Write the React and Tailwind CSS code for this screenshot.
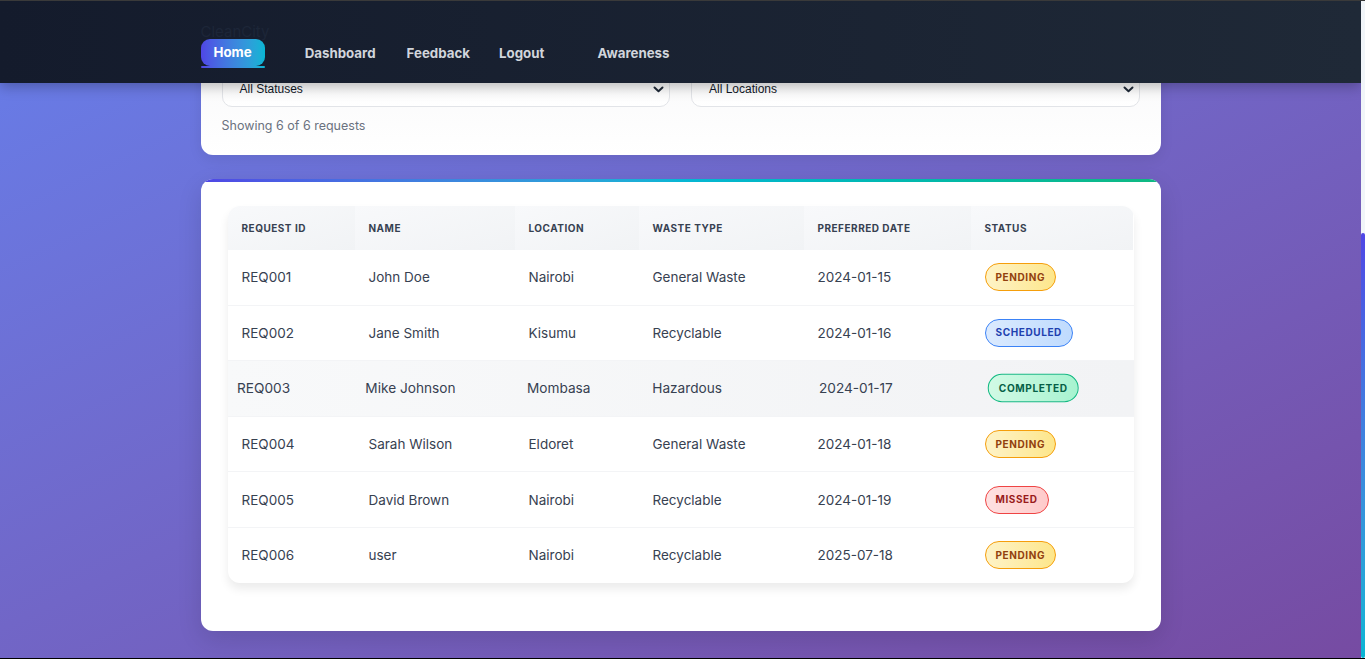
import React from 'react';

const requests = [
  { id: 'REQ001', name: 'John Doe', location: 'Nairobi', type: 'General Waste', date: '2024-01-15', status: 'pending' },
  { id: 'REQ002', name: 'Jane Smith', location: 'Kisumu', type: 'Recyclable', date: '2024-01-16', status: 'scheduled' },
  { id: 'REQ003', name: 'Mike Johnson', location: 'Mombasa', type: 'Hazardous', date: '2024-01-17', status: 'completed' },
  { id: 'REQ004', name: 'Sarah Wilson', location: 'Eldoret', type: 'General Waste', date: '2024-01-18', status: 'pending' },
  { id: 'REQ005', name: 'David Brown', location: 'Nairobi', type: 'Recyclable', date: '2024-01-19', status: 'missed' },
  { id: 'REQ006', name: 'user', location: 'Nairobi', type: 'Recyclable', date: '2025-07-18', status: 'pending' },
];

const badgeStyles = {
  pending: 'bg-gradient-to-r from-[#fef3c7] to-[#fde68a] border-[#f59e0b] text-[#92400e]',
  scheduled: 'bg-gradient-to-r from-[#dbeafe] to-[#bfdbfe] border-[#3b82f6] text-[#1e40af]',
  completed: 'bg-gradient-to-r from-[#d1fae5] to-[#a7f3d0] border-[#10b981] text-[#065f46]',
  missed: 'bg-gradient-to-r from-[#fee2e2] to-[#fecaca] border-[#ef4444] text-[#991b1b]',
};

const cols = 'grid grid-cols-[127px_160px_124px_165px_167px_162px]';

const Chevron = () => (
  <svg width="11" height="7" viewBox="0 0 11 7" fill="none">
    <path d="M1.5 1.5L5.5 5.2L9.5 1.5" stroke="#1f2937" strokeWidth="2" strokeLinecap="round" strokeLinejoin="round" />
  </svg>
);

const FakeSelect = ({ label }) => (
  <div className="h-[36px] flex items-center justify-between pl-[17px] pr-[5px] bg-gradient-to-b from-[#f7f7f8] to-white border border-[#e2e4e8] rounded-[10px] font-['Liberation_Sans',Arial,sans-serif] text-[12px] text-[#111827]">
    <span>{label}</span>
    <Chevron />
  </div>
);

const StatusBadge = ({ status }) => (
  <span className={`inline-flex items-center h-[28px] px-[10px] rounded-full border text-[10px] font-bold uppercase tracking-[0.06em] ${badgeStyles[status]}`}>
    {status}
  </span>
);

export default function App() {
  return (
    <div className="h-[659px] flex border-t border-t-[#3a3a3a] border-b border-b-black overflow-hidden font-['Inter',sans-serif]">
      <div className="flex-1 relative overflow-hidden bg-gradient-to-br from-[#667eea] to-[#764ba2]">
        {/* fixed navbar */}
        <header className="absolute inset-x-0 top-0 z-10 h-[82px] bg-gradient-to-r from-[#141b2c] to-[#1f2937] shadow-[0_4px_12px_rgba(0,0,0,0.25)]">
          <div className="w-[960px] mx-auto pt-[24px] flex flex-col">
            <span className="text-[15px] leading-[14px] text-[#1d2638]">CleanCity</span>
            <nav className="flex items-start text-[13.3px] font-bold text-gray-300">
              <div className="flex flex-col">
                <a className="h-[27px] px-[13px] flex items-center rounded-[9px] text-white bg-gradient-to-r from-[#4f46e5] to-[#06b6d4]">Home</a>
                <div className="h-[2px] rounded-full bg-gradient-to-r from-[#4f46e5] to-[#06b6d4]" />
              </div>
              <a className="h-[29px] px-[13px] ml-[27px] flex items-center">Dashboard</a>
              <a className="h-[29px] px-[13px] ml-[5px] flex items-center">Feedback</a>
              <a className="h-[29px] px-[13px] ml-[3px] flex items-center">Logout</a>
              <a className="h-[29px] px-[13px] ml-[27px] flex items-center">Awareness</a>
            </nav>
          </div>
        </header>

        <main className="w-[960px] mx-auto pt-[18px]">
          {/* Filters card */}
          <div className="bg-gradient-to-b from-[#f6f6f7] to-white rounded-[12px] shadow-[0_4px_14px_rgba(0,0,0,0.08)] pt-[21px] px-[21px] pb-[20px]">
            <h2 className="text-lg font-bold leading-[28px] mb-[3px] text-gray-800">Filter Requests</h2>
            <div className="grid grid-cols-2 gap-[21px]">
              <FakeSelect label="All Statuses" />
              <FakeSelect label="All Locations" />
            </div>
            <p className="mt-[10px] text-[12.5px] leading-[18px] text-[#6b7280]">Showing 6 of 6 requests</p>
          </div>

          {/* Requests table card */}
          <div className="mt-[24px] bg-white rounded-[12px] overflow-hidden shadow-[0_8px_24px_rgba(0,0,0,0.12)]">
            <div className="h-[3px] bg-gradient-to-r from-[#4f46e5] via-[#06b6d4] to-[#10b981]" />
            <div className="pt-[24px] px-[27px] pb-[48px]">
              <div className="rounded-[12px] bg-white shadow-[0_6px_10px_rgba(0,0,0,0.08)]">
                <div className={`${cols} h-[44px] rounded-t-[12px] overflow-hidden`}>
                  {['Request ID', 'Name', 'Location', 'Waste Type', 'Preferred Date', 'Status'].map((h) => (
                    <div key={h} className="flex items-center pl-[14px] pt-[1px] bg-gradient-to-br from-[#f8f9fb] to-[#f1f3f5] text-[10px] font-bold uppercase tracking-[0.05em] text-[#374151]">
                      {h}
                    </div>
                  ))}
                </div>
                {requests.map((r, i) => {
                  const hovered = r.id === 'REQ003';
                  return (
                    <div
                      key={r.id}
                      className={`${i < requests.length - 1 ? 'border-b border-[#f3f4f6]' : 'rounded-b-[12px]'} ${hovered ? 'bg-gradient-to-r from-[#f8f9fa] to-[#f2f3f5]' : ''}`}
                    >
                      <div className={`${cols} h-[54.6px] items-center text-[13.5px] text-[#374151] ${hovered ? 'scale-[1.0104] origin-[494px_50%]' : ''}`}>
                        <div className="pl-[14px]">{r.id}</div>
                        <div className="pl-[14px]">{r.name}</div>
                        <div className="pl-[14px]">{r.location}</div>
                        <div className="pl-[14px]">{r.type}</div>
                        <div className="pl-[14px]">{r.date}</div>
                        <div className="pl-[14px]">
                          <StatusBadge status={r.status} />
                        </div>
                      </div>
                    </div>
                  );
                })}
              </div>
            </div>
          </div>
        </main>
      </div>

      {/* custom scrollbar */}
      <div className="w-[4px] flex flex-col bg-[#f1f5f9]">
        <div className="h-[232px]" />
        <div className="flex-1 rounded-full bg-gradient-to-b from-[#4f46e5] to-[#06b6d4]" />
      </div>
    </div>
  );
}
